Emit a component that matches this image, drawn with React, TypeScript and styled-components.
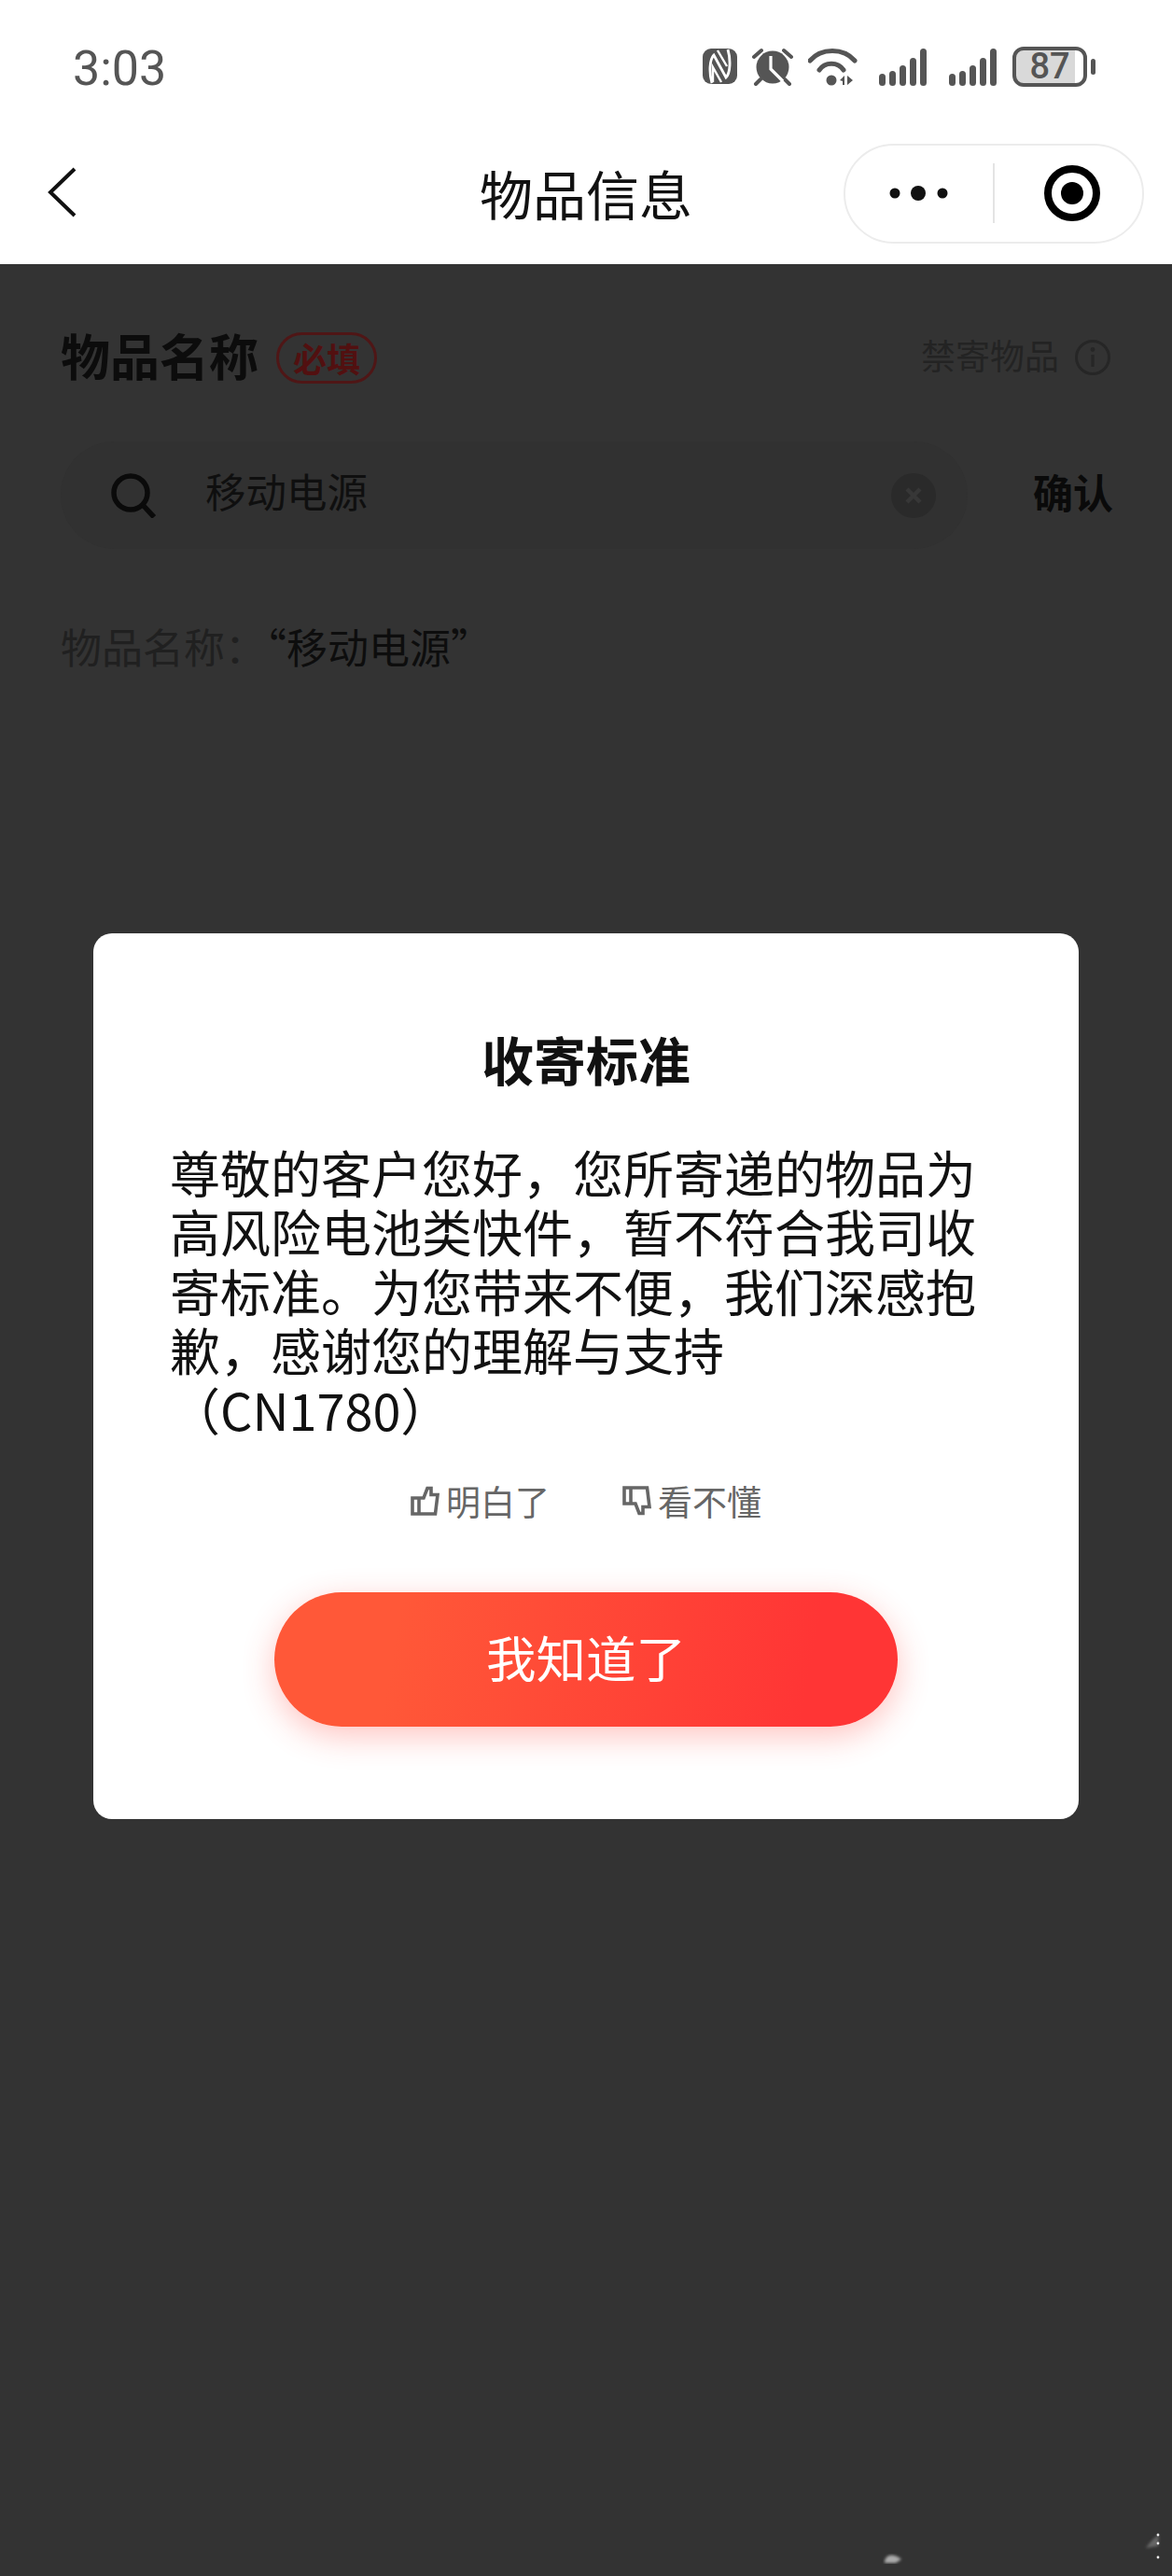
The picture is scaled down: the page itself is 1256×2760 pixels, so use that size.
import styled, { createGlobalStyle } from "styled-components"

const cjk = `"Noto Sans CJK SC", "Liberation Sans", sans-serif`

const Global = createGlobalStyle`
    html, body {
        margin: 0;
        padding: 0;
        background: #fff;
    }
    * {
        box-sizing: border-box;
    }
`

const Page = styled.div`
    width: 1256px;
    height: 2760px;
    display: flex;
    flex-direction: column;
    overflow: hidden;
    font-family: ${cjk};
    background: #fff;
`

const StatusBar = styled.div`
    height: 142px;
    padding: 0 91px 0 78px;
    display: flex;
    justify-content: space-between;
    align-items: center;
`

const Clock = styled.span`
    padding-top: 5px;
    font-family: Roboto, "Liberation Sans", sans-serif;
    font-size: 52px;
    color: #555;
    line-height: 60px;
`

const StatusIcons = styled.div`
    display: flex;
    align-items: center;
    gap: 16px;
    color: #555;
`

const SignalIcon = styled.svg`
    width: 52px;
    height: 41px;
    margin-left: 7px;
`

const Battery = styled.div`
    width: 80px;
    height: 43px;
    border: 4px solid #555;
    border-radius: 12px;
    display: flex;
    justify-content: center;
    align-items: center;
    position: relative;
    background: linear-gradient(90deg, #d9d9d9 87%, #fff 87%);
    font-family: Roboto, "Liberation Sans", sans-serif;
    font-size: 38px;
    font-weight: 500;
    color: #555;
    line-height: 1;
    &::after {
        content: "";
        position: absolute;
        right: -13px;
        top: 9px;
        width: 5px;
        height: 17px;
        border-radius: 3px;
        background: #555;
    }
`

const NavBar = styled.div`
    height: 141px;
    padding: 0 30px 0 50px;
    display: flex;
    align-items: center;
    justify-content: space-between;
    position: relative;
`

const BackIcon = styled.svg`
    width: 34px;
    height: 56px;
    margin-top: -14px;
`

const NavTitle = styled.div`
    position: absolute;
    left: 0;
    right: 0;
    top: 29px;
    text-align: center;
    font-size: 57px;
    font-weight: 400;
    color: #111;
    line-height: 70px;
`

const Capsule = styled.div`
    width: 322px;
    height: 107px;
    margin-top: -11px;
    border: 2px solid #ececec;
    border-radius: 54px;
    display: flex;
    align-items: center;
`

const CapsuleSlot = styled.div`
    flex: 1;
    height: 100%;
    display: flex;
    align-items: center;
    justify-content: center;
`

const CapsuleLine = styled.div`
    width: 2px;
    height: 64px;
    background: #e4e4e4;
`

const TargetIcon = styled.svg`
    width: 60px;
    height: 60px;
    margin-left: 8px;
`

const Dimmed = styled.div`
    flex: 1;
    position: relative;
    background: #333;
    padding: 64px 65px 0 65px;
`

const FieldHead = styled.div`
    display: flex;
    align-items: center;
    justify-content: space-between;
    height: 66px;
`

const HeadLeft = styled.div`
    display: flex;
    align-items: center;
    gap: 19px;
`

const FieldName = styled.div`
    font-size: 53px;
    font-weight: 700;
    color: #0c0c0c;
    line-height: 66px;
`

const Required = styled.span`
    width: 108px;
    height: 55px;
    margin-top: 6px;
    border: 3px solid #4f1616;
    border-radius: 28px;
    display: flex;
    align-items: center;
    justify-content: center;
    font-size: 36px;
    font-weight: 700;
    color: #521010;
    line-height: 1;
`

const Forbidden = styled.div`
    display: flex;
    align-items: center;
    gap: 16px;
    font-size: 37px;
    color: #232323;
    line-height: 50px;
`

const InfoIcon = styled.svg`
    width: 40px;
    height: 40px;
    margin-top: 6px;
`

const SearchRow = styled.div`
    margin-top: 60px;
    display: flex;
    align-items: center;
    justify-content: space-between;
`

const SearchBox = styled.div`
    width: 972px;
    height: 115px;
    border-radius: 58px;
    background: #313131;
    padding: 0 34px 0 54px;
    display: flex;
    align-items: center;
`

const SearchText = styled.span`
    flex: 1;
    margin-left: 53px;
    padding-bottom: 10px;
    font-size: 43.5px;
    color: #0f0f0f;
    line-height: 60px;
`

const Confirm = styled.span`
    padding-bottom: 10px;
    margin-right: -2px;
    font-size: 43px;
    font-weight: 700;
    color: #0a0a0a;
    line-height: 60px;
`

const NameLine = styled.div`
    margin-top: 74px;
    font-size: 44px;
    color: #202020;
    line-height: 60px;
    b {
        font-weight: 400;
        color: #0d0d0d;
    }
`

const Dialog = styled.div`
    position: absolute;
    top: 717px;
    left: 100px;
    width: 1056px;
    height: 949px;
    background: #fff;
    border-radius: 20px;
    padding: 99px 82px 0;
    display: flex;
    flex-direction: column;
`

const DialogTitle = styled.div`
    font-size: 56px;
    font-weight: 700;
    color: #111;
    text-align: center;
    line-height: 70px;
`

const DialogBody = styled.div`
    margin-top: 55px;
    font-size: 54px;
    color: #111;
    line-height: 63.4px;
    span {
        display: block;
        white-space: nowrap;
    }
`

const Feedback = styled.div`
    margin-top: 42px;
    display: flex;
    justify-content: center;
    gap: 78px;
`

const FeedbackItem = styled.div`
    display: flex;
    align-items: center;
    gap: 7px;
    font-size: 37px;
    color: #666;
    line-height: 50px;
`

const ThumbIcon = styled.svg<{ $down?: boolean }>`
    width: 31px;
    height: 32px;
    transform: ${(p) => (p.$down ? "scaleY(-1)" : "none")};
    fill: none;
    stroke: #666;
    stroke-width: 3.6;
`

const MainButton = styled.div`
    margin: 73px auto 0;
    width: 668px;
    height: 144px;
    padding-bottom: 6px;
    border-radius: 72px;
    background: linear-gradient(100deg, #ff5838 20%, #ff3535 85%);
    box-shadow: 0 10px 34px rgba(255, 60, 50, 0.3);
    display: flex;
    align-items: center;
    justify-content: center;
    font-size: 53.5px;
    color: #fff;
    line-height: 1;
`

const Smudges = styled.svg`
    position: absolute;
    right: 0;
    bottom: 0;
    width: 356px;
    height: 80px;
`

function Nfc() {
    return (
        <svg width="37" height="38" viewBox="0 0 37 38">
            <rect width="37" height="38" rx="9" fill="currentColor" />
            <path d="M10 37 C7 27 7 12 12 7 L25 31 C30 26 30 11 27 1" stroke="#fff" strokeWidth="2.8" fill="none" />
            <path d="M16 2 L26 19 M11 36 V20 L20 36" stroke="#fff" strokeWidth="2.4" fill="none" />
        </svg>
    )
}

function Alarm() {
    return (
        <svg width="44" height="41" viewBox="0 0 44 41">
            <circle cx="22" cy="21" r="17.5" fill="currentColor" />
            <path d="M2 10 L10 3M42 10 L34 3" stroke="currentColor" strokeWidth="4" strokeLinecap="round" />
            <path d="M9 34 L4 39M35 34 L40 39" stroke="currentColor" strokeWidth="4" strokeLinecap="round" />
            <path d="M20 9 V23 L33 36" stroke="#fff" strokeWidth="3.2" fill="none" />
        </svg>
    )
}

function Wifi() {
    return (
        <svg width="53" height="41" viewBox="0 0 53 41">
            <path d="M2 14 C14 0 38 0 50 14" stroke="currentColor" strokeWidth="5" strokeLinecap="round" fill="none" />
            <path d="M12 24 C18 15 32 15 38 24" stroke="currentColor" strokeWidth="5" strokeLinecap="round" fill="none" />
            <circle cx="25" cy="35" r="5.5" fill="currentColor" />
            <path d="M34 35 L39 30 V40 H37 V36 Z M42 30 V40 L48 35 Z" fill="currentColor" />
        </svg>
    )
}

function Signal() {
    const bars = [13, 16, 22, 30, 40]
    return (
        <SignalIcon viewBox="0 0 52 41">
            {bars.map((h, i) => (
                <rect key={i} x={i * 11} y={41 - h} width="7" height={h} rx="3.5" fill="currentColor" />
            ))}
        </SignalIcon>
    )
}

function Thumb({ down }: { down?: boolean }) {
    return (
        <ThumbIcon $down={down} viewBox="0 0 31 32">
            <path d="M9 13 H14 L18 2.5 H22 V9.5 H29 L26.5 30 H2 V13 H9 V30" />
        </ThumbIcon>
    )
}

export default function App() {
    return (
        <Page>
            <Global />
            <StatusBar>
                <Clock>3:03</Clock>
                <StatusIcons>
                    <Nfc />
                    <Alarm />
                    <Wifi />
                    <Signal />
                    <Signal />
                    <Battery>87</Battery>
                </StatusIcons>
            </StatusBar>
            <NavBar>
                <BackIcon viewBox="0 0 34 56">
                    <path d="M30 3 L4 28 L30 53" stroke="#111" strokeWidth="4" fill="none" />
                </BackIcon>
                <NavTitle>物品信息</NavTitle>
                <Capsule>
                    <CapsuleSlot>
                        <svg width="66" height="20" viewBox="0 0 66 20">
                            <circle cx="7" cy="10" r="5.5" fill="#111" />
                            <circle cx="32" cy="10" r="8" fill="#111" />
                            <circle cx="58" cy="10" r="5.5" fill="#111" />
                        </svg>
                    </CapsuleSlot>
                    <CapsuleLine />
                    <CapsuleSlot>
                        <TargetIcon viewBox="0 0 60 60">
                            <circle cx="30" cy="30" r="26" stroke="#000" strokeWidth="8" fill="none" />
                            <circle cx="30" cy="30" r="12" fill="#000" />
                        </TargetIcon>
                    </CapsuleSlot>
                </Capsule>
            </NavBar>
            <Dimmed>
                <FieldHead>
                    <HeadLeft>
                        <FieldName>物品名称</FieldName>
                        <Required>必填</Required>
                    </HeadLeft>
                    <Forbidden>
                        禁寄物品
                        <InfoIcon viewBox="0 0 40 40">
                            <circle cx="20" cy="20" r="17.5" stroke="#262626" strokeWidth="3" fill="none" />
                            <circle cx="20" cy="11.5" r="2.4" fill="#262626" />
                            <path d="M20 17 V30" stroke="#262626" strokeWidth="3.2" />
                        </InfoIcon>
                    </Forbidden>
                </FieldHead>
                <SearchRow>
                    <SearchBox>
                        <svg width="48" height="48" viewBox="0 0 48 48">
                            <circle cx="21" cy="21" r="18" stroke="#0a0a0a" strokeWidth="5.5" fill="none" />
                            <path d="M34 34 L46 47" stroke="#0a0a0a" strokeWidth="5.5" />
                        </svg>
                        <SearchText>移动电源</SearchText>
                        <svg width="48" height="48" viewBox="0 0 48 48">
                            <circle cx="24" cy="24" r="24" fill="#2a2a2a" />
                            <path d="M17 17 L31 31M31 17 L17 31" stroke="#373737" strokeWidth="4.5" />
                        </svg>
                    </SearchBox>
                    <Confirm>确认</Confirm>
                </SearchRow>
                <NameLine>
                    物品名称：<b>“移动电源”</b>
                </NameLine>
                <Dialog>
                    <DialogTitle>收寄标准</DialogTitle>
                    <DialogBody>
                        <span>尊敬的客户您好，您所寄递的物品为</span>
                        <span>高风险电池类快件，暂不符合我司收</span>
                        <span>寄标准。为您带来不便，我们深感抱</span>
                        <span>歉，感谢您的理解与支持</span>
                        <span>（CN1780）</span>
                    </DialogBody>
                    <Feedback>
                        <FeedbackItem>
                            <Thumb />
                            明白了
                        </FeedbackItem>
                        <FeedbackItem>
                            <Thumb down />
                            看不懂
                        </FeedbackItem>
                    </Feedback>
                    <MainButton>我知道了</MainButton>
                </Dialog>
                <Smudges viewBox="0 0 356 80">
                    <defs>
                        <filter id="soft">
                            <feGaussianBlur stdDeviation="1.5" />
                        </filter>
                    </defs>
                    <path d="M48 64 C50 56 58 56 66 62 L60 66 H48 Z" fill="#aaa" filter="url(#soft)" />
                    <path d="M328 50 C332 44 338 38 342 36 L341 48 Z" fill="#666" filter="url(#soft)" />
                    <circle cx="341" cy="36" r="1.4" fill="#eee" />
                    <circle cx="341" cy="45" r="1.4" fill="#eee" />
                    <circle cx="341" cy="60" r="1.4" fill="#eee" />
                </Smudges>
            </Dimmed>
        </Page>
    )
}
